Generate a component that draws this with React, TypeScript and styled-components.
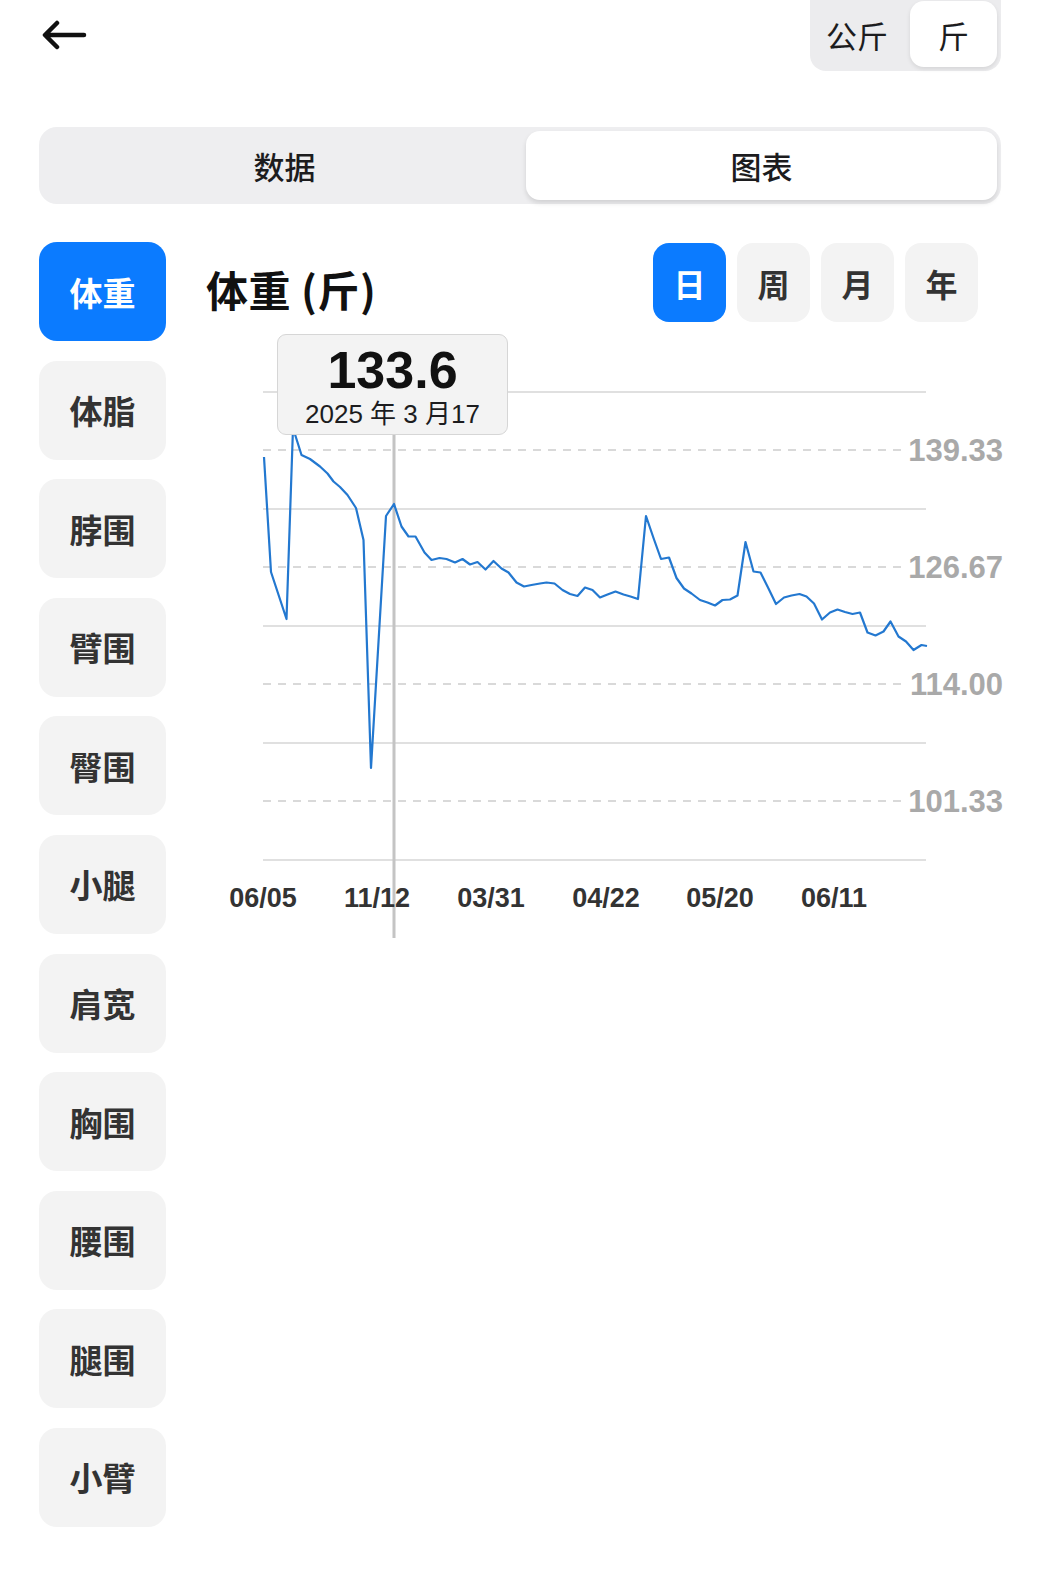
import styled, { createGlobalStyle } from 'styled-components';

const GlobalStyle = createGlobalStyle`
  html, body {
    margin: 0;
    padding: 0;
    background: #ffffff;
  }
  body {
    font-family: "Noto Sans CJK SC", "Liberation Sans", sans-serif;
    color: #1c1c1e;
  }
`;

const Page = styled.div`
  display: flex;
  flex-direction: column;
  width: 1044px;
  min-height: 1573px;
  box-sizing: border-box;
  padding: 0 43px 0 39px;
`;

const TopBar = styled.div`
  display: flex;
  align-items: center;
  justify-content: space-between;
  height: 72px;
`;

const BackButton = styled.button`
  display: flex;
  align-items: center;
  justify-content: center;
  width: 50px;
  height: 36px;
  margin-top: -2px;
  padding: 0;
  border: 0;
  background: transparent;
  color: #111;
`;

const UnitToggle = styled.div`
  display: flex;
  align-items: flex-start;
  height: 72px;
  padding: 2px 4px 0 14px;
  box-sizing: border-box;
  margin-top: -2px;
  background: #ececee;
  border-radius: 0 0 16px 16px;
`;

const UnitOption = styled.div<{ $active?: boolean }>`
  display: flex;
  align-items: center;
  justify-content: center;
  height: 66px;
  padding: 0 ${(p) => (p.$active ? '28px' : '22px')} 0 ${(p) => (p.$active ? '28px' : '2px')};
  font-size: 31px;
  color: #1c1c1e;
  background: ${(p) => (p.$active ? '#ffffff' : 'transparent')};
  border-radius: 14px;
  box-shadow: ${(p) => (p.$active ? '0 2px 4px rgba(0,0,0,0.1)' : 'none')};
`;

const Segment = styled.div`
  display: grid;
  grid-template-columns: 483px 1fr;
  height: 77px;
  margin-top: 55px;
  padding: 4px;
  box-sizing: border-box;
  background: #eeeef0;
  border-radius: 18px;
`;

const SegmentItem = styled.div<{ $active?: boolean }>`
  display: flex;
  align-items: center;
  justify-content: center;
  font-size: 31px;
  font-weight: 500;
  color: #1c1c1e;
  border-radius: 14px;
  background: ${(p) => (p.$active ? '#ffffff' : 'transparent')};
  box-shadow: ${(p) => (p.$active ? '0 3px 5px rgba(0,0,0,0.12)' : 'none')};
`;

const Main = styled.div`
  display: flex;
  margin-top: 38px;
`;

const Sidebar = styled.div`
  display: flex;
  flex-direction: column;
  gap: 19.6px;
  width: 127px;
  flex-shrink: 0;
`;

const SideItem = styled.div<{ $active?: boolean }>`
  display: flex;
  align-items: center;
  justify-content: center;
  height: 99px;
  border-radius: 18px;
  font-size: 33px;
  font-weight: 700;
  color: ${(p) => (p.$active ? '#ffffff' : '#333333')};
  background: ${(p) => (p.$active ? '#0b7bff' : '#f3f3f3')};
`;

const Content = styled.div`
  display: flex;
  flex-direction: column;
  margin-left: 40px;
  margin-right: -43px;
  flex: 1;
`;

const Header = styled.div`
  display: flex;
  align-items: flex-start;
  justify-content: space-between;
  height: 80px;
  padding-right: 66px;
`;

const Title = styled.h1`
  margin: 22px 0 0;
  font-size: 42px;
  line-height: 50px;
  font-weight: 700;
  color: #111111;
  letter-spacing: 0.5px;
`;

const Periods = styled.div`
  display: flex;
  gap: 11px;
  margin-top: 1px;
`;

const PeriodButton = styled.div<{ $active?: boolean }>`
  display: flex;
  align-items: center;
  justify-content: center;
  width: 73px;
  height: 79px;
  border-radius: 16px;
  font-size: 32px;
  font-weight: 700;
  color: ${(p) => (p.$active ? '#ffffff' : '#333333')};
  background: ${(p) => (p.$active ? '#0b7bff' : '#f3f3f3')};
`;

const ChartWrap = styled.div`
  position: relative;
  width: 838px;
  height: 615px;
  margin-top: 8px;
`;

const ChartSvg = styled.svg`
  display: block;
  width: 838px;
  height: 615px;
`;

const Tooltip = styled.div`
  position: absolute;
  left: 71px;
  top: 4px;
  width: 231px;
  height: 101px;
  box-sizing: border-box;
  display: flex;
  flex-direction: column;
  align-items: center;
  background: #f3f3f3;
  border: 1px solid #d6d6d6;
  border-radius: 9px;
`;

const TipValue = styled.div`
  margin-top: 7px;
  font-family: "Liberation Sans", "Noto Sans CJK SC", sans-serif;
  font-size: 52px;
  line-height: 56px;
  font-weight: 700;
  color: #111111;
`;

const TipDate = styled.div`
  font-family: "Liberation Sans", "Noto Sans CJK SC", sans-serif;
  font-size: 26px;
  line-height: 32px;
  color: #1c1c1e;
  white-space: pre;
`;

// plot in page coordinates (svg viewBox is offset to match)
const PLOT_LEFT = 263;
const PLOT_RIGHT = 926;
const SOLID_Y = [392, 509, 626, 743, 860];
const DASHED = [
  { y: 450, label: '139.33' },
  { y: 567, label: '126.67' },
  { y: 684, label: '114.00' },
  { y: 801, label: '101.33' },
];
const X_LABELS = [
  { x: 263, label: '06/05' },
  { x: 377, label: '11/12' },
  { x: 491, label: '03/31' },
  { x: 606, label: '04/22' },
  { x: 720, label: '05/20' },
  { x: 834, label: '06/11' },
];

const POINTS: [number, number][] = [
  [264, 457], [271, 572], [286.5, 619], [293, 428], [301.5, 455], [310, 459],
  [320, 466.5], [327.5, 473.5], [333.5, 481.5], [340, 487], [347.5, 495],
  [356, 508], [363.5, 540], [371, 768], [386, 516], [394, 504], [401.5, 526.5],
  [408.5, 536.5], [415.5, 536.5], [424.5, 552.5], [431.5, 560], [439.5, 558],
  [446.5, 559], [455, 562.5], [462.5, 559], [470, 564.5], [477.5, 562],
  [485.5, 569.5], [493.5, 561], [501.5, 568.5], [508.5, 572.5], [516.5, 582.5],
  [524, 586.5], [531.5, 585], [540, 583.5], [546.5, 582.5], [554.5, 583.5],
  [562.5, 590], [570, 594], [577.5, 596], [585, 587.5], [592.5, 590],
  [600, 597.5], [607.5, 594.5], [615.5, 591.5], [623.5, 594.5], [630.5, 596.5],
  [638, 599], [646, 516], [653.5, 538], [661, 559], [669, 557.5], [676.5, 578],
  [684, 588.5], [691.5, 593.5], [700, 600], [707.5, 602.5], [715, 605.5],
  [722.5, 600], [730, 599.5], [737.5, 595.5], [745.5, 542], [753.5, 571.5],
  [760.5, 572.5], [768.5, 588.5], [776, 604], [784, 597.5], [791.5, 595.5],
  [799.5, 594], [806.5, 596.5], [814, 603.5], [822, 619.5], [830, 612.5],
  [837.5, 609.5], [845, 612], [852.5, 614], [860, 612.5], [867.5, 632.5],
  [875.5, 635.5], [883.5, 631.5], [890.5, 621.5], [898.5, 636.5], [906, 641.5],
  [913.5, 650], [921.5, 645], [927, 646],
];

const CURSOR_X = 394;

const SIDE_ITEMS = ['体重', '体脂', '脖围', '臂围', '臀围', '小腿', '肩宽', '胸围', '腰围', '腿围', '小臂'];
const PERIODS = ['日', '周', '月', '年'];

function WeightChart() {
  const path = POINTS.map(([x, y], i) => `${i === 0 ? 'M' : 'L'}${x} ${y}`).join(' ');
  return (
    <ChartWrap>
      <ChartSvg viewBox="206 330 838 615">
        {SOLID_Y.map((y) => (
          <line key={y} x1={PLOT_LEFT} x2={PLOT_RIGHT} y1={y} y2={y} stroke="#e0e0e0" strokeWidth={2} />
        ))}
        {DASHED.map((d) => (
          <g key={d.label}>
            <line
              x1={PLOT_LEFT}
              x2={904}
              y1={d.y}
              y2={d.y}
              stroke="#d9d9d9"
              strokeWidth={2}
              strokeDasharray="8 7"
            />
            <text
              x={1003}
              y={d.y + 11}
              textAnchor="end"
              fontFamily="Liberation Sans, sans-serif"
              fontWeight={700}
              fontSize={31}
              fill="#a9a9a9"
            >
              {d.label}
            </text>
          </g>
        ))}
        <line x1={CURSOR_X} x2={CURSOR_X} y1={430} y2={938} stroke="#c4c4c4" strokeWidth={3} />
        <path d={path} fill="none" stroke="#2378d0" strokeWidth={2.2} strokeLinejoin="round" />
        {X_LABELS.map((l) => (
          <text
            key={l.label}
            x={l.x}
            y={907}
            textAnchor="middle"
            fontFamily="Liberation Sans, sans-serif"
            fontWeight={700}
            fontSize={27}
            fill="#333333"
          >
            {l.label}
          </text>
        ))}
      </ChartSvg>
      <Tooltip>
        <TipValue>133.6</TipValue>
        <TipDate>2025 年 3 月17</TipDate>
      </Tooltip>
    </ChartWrap>
  );
}

export default function App() {
  return (
    <>
      <GlobalStyle />
      <Page>
        <TopBar>
          <BackButton aria-label="返回">
            <svg width="46" height="30" viewBox="0 0 46 30" fill="none">
              <path
                d="M43 15H5M16 3L4 15l12 12"
                stroke="currentColor"
                strokeWidth="4.5"
                strokeLinecap="round"
                strokeLinejoin="round"
              />
            </svg>
          </BackButton>
          <UnitToggle>
            <UnitOption>公斤</UnitOption>
            <UnitOption $active>斤</UnitOption>
          </UnitToggle>
        </TopBar>
        <Segment>
          <SegmentItem>数据</SegmentItem>
          <SegmentItem $active>图表</SegmentItem>
        </Segment>
        <Main>
          <Sidebar>
            {SIDE_ITEMS.map((item, i) => (
              <SideItem key={item} $active={i === 0}>
                {item}
              </SideItem>
            ))}
          </Sidebar>
          <Content>
            <Header>
              <Title>体重 (斤)</Title>
              <Periods>
                {PERIODS.map((p, i) => (
                  <PeriodButton key={p} $active={i === 0}>
                    {p}
                  </PeriodButton>
                ))}
              </Periods>
            </Header>
            <WeightChart />
          </Content>
        </Main>
      </Page>
    </>
  );
}
